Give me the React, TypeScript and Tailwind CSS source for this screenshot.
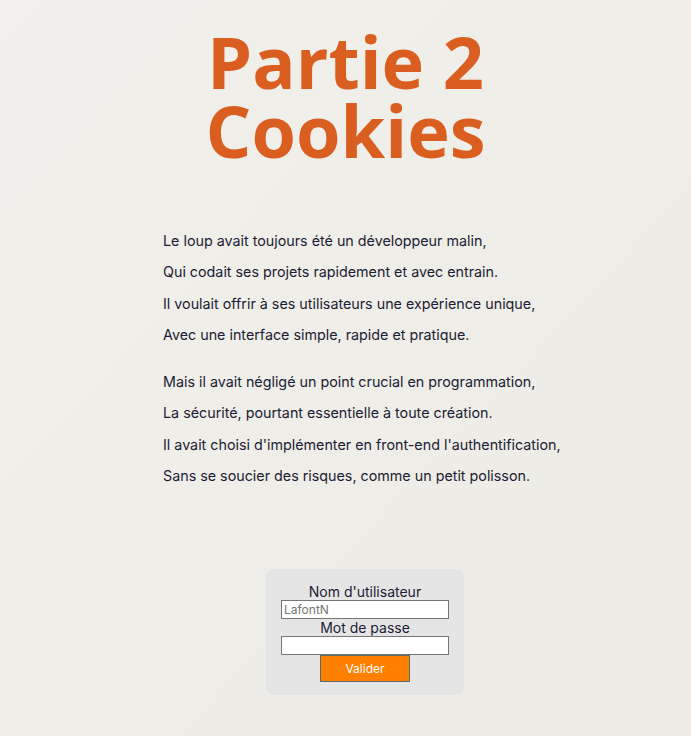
import React from 'react';

const stanzas = [
    [
        'Le loup avait toujours été un développeur malin,',
        'Qui codait ses projets rapidement et avec entrain.',
        'Il voulait offrir à ses utilisateurs une expérience unique,',
        'Avec une interface simple, rapide et pratique.',
    ],
    [
        'Mais il avait négligé un point crucial en programmation,',
        'La sécurité, pourtant essentielle à toute création.',
        "Il avait choisi d'implémenter en front-end l'authentification,",
        'Sans se soucier des risques, comme un petit polisson.',
    ],
];

export default function App() {
    return (
        <div className="min-h-[736px] w-full bg-gradient-to-br from-[#f1f0ec] to-[#ecebe4] font-['Inter',sans-serif] text-[#1c1c34]">
            {/* Title */}
            <h1 className="pt-[27px] text-center font-['Open_Sans',sans-serif] text-[72px] font-bold leading-[69px] text-[#d95e1f]">
                Partie 2
                <br />
                Cookies
            </h1>

            {/* Poem */}
            <div className="mt-[60px] pl-[163px] text-[14.3px]">
                {stanzas.map((lines, i) => (
                    <div key={i} className={i > 0 ? 'mt-[16px]' : ''}>
                        {lines.map((line) => (
                            <p key={line} className="leading-[31.3px]">{line}</p>
                        ))}
                    </div>
                ))}
            </div>

            {/* Login form */}
            <div className="mt-[78px] flex justify-center">
                <div className="ml-[39px] flex w-[198px] flex-col items-center rounded-lg bg-[#e5e5e5] pt-[14px] pb-[13px]">
                    <label className="text-[14px] leading-[17px]">Nom d'utilisateur</label>
                    <input
                        type="text"
                        placeholder="LafontN"
                        className="h-[19px] w-[168px] border border-[#767676] bg-white px-[2px] text-[12px] placeholder:text-[#757575] outline-none"
                    />
                    <label className="text-[14px] leading-[17px]">Mot de passe</label>
                    <input
                        type="password"
                        className="h-[19px] w-[168px] border border-[#767676] bg-white px-[2px] text-[12px] outline-none"
                    />
                    <button className="h-[27px] w-[90px] border border-[#5a6b6b] bg-[#ff7f00] text-[12px] text-white">
                        Valider
                    </button>
                </div>
            </div>
        </div>
    );
}
